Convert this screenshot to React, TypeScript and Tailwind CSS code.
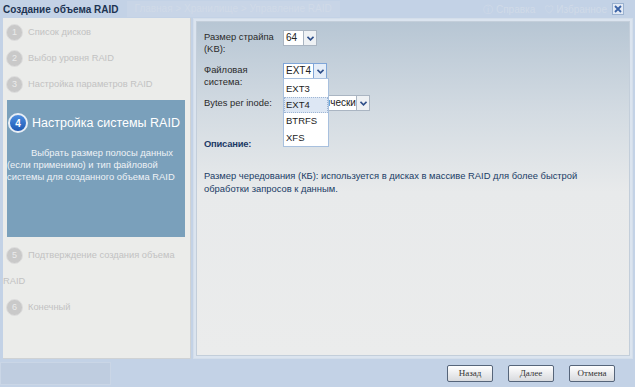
import React from 'react';

const font = { fontFamily: '"Liberation Sans", Arial, sans-serif' };

const StepDot = ({ n }: { n: number }) => (
  <span className="inline-flex items-center justify-center w-[17px] h-[17px] rounded-full bg-[#c9c9c9] border border-[#dedede] text-[9px] leading-none text-[#ebebeb] align-middle mr-[5px] ml-[3px]">
    {n}
  </span>
);

const Chevron = () => (
  <svg width="7" height="5" viewBox="0 0 7 5">
    <path d="M0.5 0.8 L3.5 3.8 L6.5 0.8" fill="none" stroke="#2f4f8a" strokeWidth="1.6" />
  </svg>
);

const Select = ({
  value,
  width,
  focused = false,
}: {
  value: string;
  width: string;
  focused?: boolean;
}) => (
  <div
    className={`flex h-[16px] bg-white border ${
      focused ? 'border-[#7fa6d8]' : 'border-[#aab5c2]'
    } ${width}`}
  >
    <div className="flex-1 pl-[2px] text-[10px] leading-[14px] text-[#222] overflow-hidden whitespace-nowrap">
      {value}
    </div>
    <div
      className={`w-[13px] shrink-0 flex items-center justify-center border-l ${
        focused ? 'border-[#7fa6d8] bg-[#e4edf8]' : 'border-[#aab5c2] bg-[#eef1f4]'
      }`}
    >
      <Chevron />
    </div>
  </div>
);

const WizButton = ({ label }: { label: string }) => (
  <button
    className="w-[46px] h-[17px] rounded-[2px] border border-[#56657a] bg-gradient-to-b from-white to-[#d8dade] text-[9px] text-[#333] leading-none"
    style={{ fontFamily: '"Liberation Serif", "Times New Roman", serif' }}
  >
    {label}
  </button>
);

export default function App() {
  return (
    <div className="w-[635px] h-[387px] bg-[#c3d2e6] flex flex-col overflow-hidden" style={font}>
      {/* title bar */}
      <div className="h-[18px] flex items-center relative">
        <span className="pl-[3px] shrink-0 text-[10px] font-bold text-[#1d3452] whitespace-nowrap">
          Создание объема RAID
        </span>
        <span className="ml-[8px] h-[16px] px-[8px] bg-[#c8d5e7] text-[10px] leading-[16px] text-[#d0dae8] whitespace-nowrap">
          Главная &gt; Хранилище &gt; Управление RAID
        </span>
        <span className="ml-auto mr-[28px] text-[10px] text-[#d0dae8] whitespace-nowrap">
          ⓘ Справка &nbsp; ♡ Избранное
        </span>
        <div className="absolute right-[11px] top-[3px] w-[12px] h-[12px] bg-[#e3eaf5] border border-[#9bb2d0] flex items-center justify-center">
          <svg width="8" height="8" viewBox="0 0 8 8">
            <path d="M1 1 L7 7 M7 1 L1 7" stroke="#3b63a6" strokeWidth="1.8" />
          </svg>
        </div>
      </div>

      <div className="flex h-[341px]">
        {/* left steps */}
        <div className="ml-[3px] w-[188px] shrink-0 bg-[#ebecea] border-r border-b border-[#cfd2d4] text-[#c2c2c2] text-[9.3px] leading-[26px]">
          <div className="pt-[1px]">
            <div className="whitespace-nowrap">
              <StepDot n={1} />
              Список дисков
            </div>
            <div className="whitespace-nowrap">
              <StepDot n={2} />
              Выбор уровня RAID
            </div>
            <div className="whitespace-nowrap">
              <StepDot n={3} />
              Настройка параметров RAID
            </div>
          </div>
          <div className="mt-[3px] ml-[4px] mr-[5px] h-[137px] bg-[#7aa0bb] leading-normal">
            <div className="flex items-center pt-[13px]">
              <span className="shrink-0 ml-[1px] w-[20px] h-[20px] rounded-full bg-gradient-to-b from-[#4d8ee0] to-[#1d58b4] border-2 border-[#e8eef5] text-white text-[10px] font-bold flex items-center justify-center">
                4
              </span>
              <span className="ml-[4px] text-[12.5px] text-white whitespace-nowrap">
                Настройка системы RAID
              </span>
            </div>
            <p className="mt-[14px] text-[9.4px] leading-[12px] text-[#eef2f6] whitespace-nowrap">
              <span className="pl-[24px]">Выбрать размер полосы данных</span>
              <br />
              (если применимо) и тип файловой
              <br />
              системы для созданного объема RAID
            </p>
          </div>
          <div className="mt-[5px] whitespace-nowrap">
            <StepDot n={5} />
            Подтверждение создания объема
            <br />
            RAID
          </div>
          <div className="whitespace-nowrap">
            <StepDot n={6} />
            Конечный
          </div>
        </div>

        {/* right panel */}
        <div className="ml-[2px] mr-[2px] flex-1 bg-[#dbe4ef] border border-[#d4deea] p-[2px]">
          <div className="h-full border border-[#c3ceda] bg-[linear-gradient(to_bottom,#b7c6d4_0px,#d3dbe2_90px,#e8eaeb_170px,#ebecec_100%)] pl-[7px] pt-[8px] text-[9.4px] text-[#2a2a2a]">
            <div className="flex">
              <div className="w-[79px] leading-[12px] pt-[1px]">
                Размер страйпа
                <br />
                (KB):
              </div>
              <Select value="64" width="w-[34px]" />
            </div>

            <div className="flex mt-[8px]">
              <div className="w-[79px] leading-[12px] pt-[1px]">
                Файловая
                <br />
                система:
              </div>
              <div className="relative">
                <Select value="EXT4" width="w-[44px]" focused />
                <div className="absolute left-0 top-[15px] w-[46px] h-[69px] bg-white border border-[#a8c0de] pt-[2px] text-[9.5px] text-[#222] z-10">
                  <div className="h-[16px] leading-[16px] pl-[2px]">EXT3</div>
                  <div className="h-[16px] leading-[14px] pl-[1px] bg-[#dde7f4] border border-dotted border-[#9fb6d4]">EXT4</div>
                  <div className="h-[16px] leading-[16px] pl-[2px]">BTRFS</div>
                  <div className="h-[17px] leading-[17px] pl-[2px]">XFS</div>
                </div>
              </div>
            </div>

            <div className="flex mt-[7px] items-center">
              <div className="w-[79px] leading-[12px]">Bytes per inode:</div>
              <Select value="Автоматически" width="w-[87px]" />
            </div>

            <div className="mt-[27px] font-bold text-[#1c3a66] leading-[12px] tracking-[-0.2px]">Описание:</div>

            <p className="mt-[19px] leading-[13px] text-[#203c66]">
              Размер чередования (КБ): используется в дисках в массиве RAID для более быстрой
              <br />
              обработки запросов к данным.
            </p>
          </div>
        </div>
      </div>

      {/* footer */}
      <div className="flex items-start flex-1 pt-[4px]">
        <div className="mt-[-1px] w-[111px] h-[23px] bg-[#bfcde0] border border-[#cad6e6]" />
        <div className="ml-auto mr-[20px] flex gap-[15px] pt-[2px]">
          <WizButton label="Назад" />
          <WizButton label="Далее" />
          <WizButton label="Отмена" />
        </div>
      </div>
    </div>
  );
}
